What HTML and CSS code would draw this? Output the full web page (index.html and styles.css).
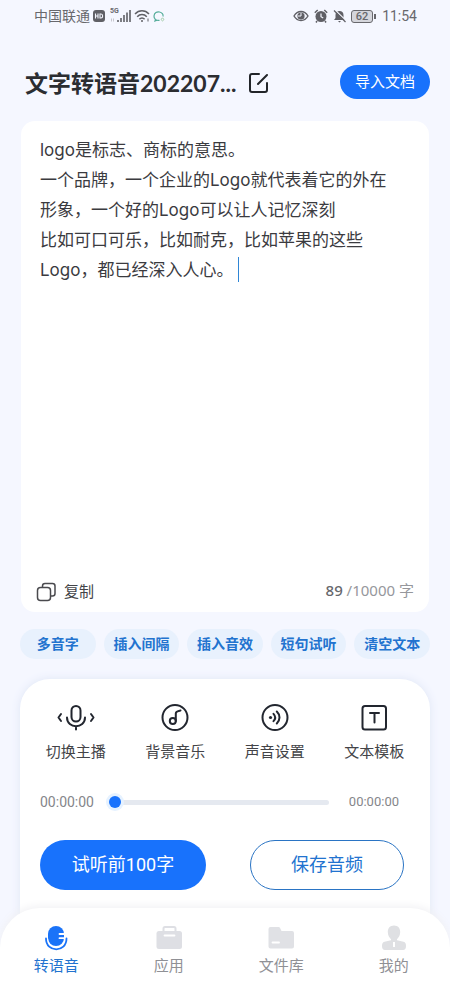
FILE: index.html
```html
<!DOCTYPE html>
<html lang="zh-CN">
<head>
<meta charset="utf-8">
<meta name="viewport" content="width=device-width, initial-scale=1">
<title>文字转语音</title>
<link rel="stylesheet" href="styles.css">
</head>
<body>
<div class="app">
  <div class="status">
    <div class="status-group">
      <span>中国联通</span>
      <svg width="12" height="12" viewBox="0 0 12 12"><rect width="12" height="12" rx="3" fill="#606066"/><path d="M2.5 3.5v5M5 3.5v5M2.5 6H5M7 4v4h1c2.200 0 2.200-4 0-4z" fill="none" stroke="#f5f7ff" stroke-width="1.100"/></svg>
      <span class="signal"><span class="signal-label">5G</span><svg width="21" height="14" viewBox="0 0 21 14"><path d="M8 11v2M11 9v4M14 6v7M17 3.500v9.500M20 1v12" stroke="#606066" stroke-width="1.600" fill="none"/><path d="M1 11h4" stroke="#c8c8cf" stroke-width="3" stroke-dasharray="1 1"/></svg></span>
      <svg width="16" height="14" viewBox="0 0 16 14" fill="none" stroke="#606066" stroke-width="1.500"><path d="M1 5c4-4.300 10-4.300 14 0M3.200 7.700c2.700-3 6.900-3 9.600 0M5.400 10.200c1.500-1.700 3.700-1.700 5.200 0"/><circle cx="8" cy="12" r="1" fill="#606066" stroke="none"/><path d="M14 9.500v3" stroke-width="1"/></svg>
      <svg width="12" height="13" viewBox="0 0 12 13" fill="none" stroke-width="1.200"><path d="M6.500 10.300C3 11 .8 8.500 1 6 1.300 2.800 4 1.500 6.500 2 9 2.500 10.500 4.500 10 6.500" stroke="#55ad9b"/><path d="M2.500 9.500L2 11l2-.8" stroke="#55ad9b"/><path d="M8 9.500l1.500-1.700L11 9.500l-1.500 1.400z" stroke="#a0cba6" stroke-width="1"/></svg>
    </div>
    <div class="status-group">
      <svg width="16" height="12" viewBox="0 0 16 12"><path d="M1 6c3.500-6 10.500-6 14 0-3.500 6-10.500 6-14 0z" fill="none" stroke="#606066" stroke-width="1.400"/><circle cx="8" cy="6" r="3.600" fill="#606066"/><path d="M8 3v3H5" fill="none" stroke="#f5f7ff"/></svg>
      <svg class="status-alarm" width="14" height="14" viewBox="0 0 14 14"><circle cx="7" cy="7.500" r="5.500" fill="#606066"/><path d="M.8 3.700L3.700 1M13.200 3.700L10.300 1M3 12l-1 1.500M11 12l1 1.500" stroke="#606066" stroke-width="1.500"/><path d="M7 4.500v3.200l2.200 1.300" fill="none" stroke="#f5f7ff" stroke-width="1.200"/></svg>
      <svg width="13" height="14" viewBox="0 0 13 14"><path d="M1 11l1.500-2V6C2.500 3.500 4.200 2 6.500 2s4 1.500 4 4v3l1.500 2zM5 12h3l-1.500 1.500z" fill="#606066"/><path d="M1.500 .5l12 11.500" stroke="#f5f7ff" stroke-width="1.200"/><path d="M1 1.500l11.500 11.500" stroke="#606066" stroke-width="1.200"/></svg>
      <span class="battery">62</span>
      <span class="clock">11:54</span>
    </div>
  </div>

  <header class="header">
    <h1 class="title">文字转语音202207...</h1>
    <button class="icon-button" type="button" aria-label="重命名">
      <svg width="22" height="22" viewBox="0 0 22 22" fill="none" stroke="#222529" stroke-width="2" stroke-linecap="round" stroke-linejoin="round"><path d="M11 2H4a2 2 0 0 0-2 2v14a2 2 0 0 0 2 2h13a2 2 0 0 0 2-2v-7M10 12L19 3"/></svg>
    </button>
    <button class="import" type="button">导入文档</button>
  </header>

  <main class="main">
    <section class="editor">
      <textarea class="editor-text" aria-label="文本内容" spellcheck="false">logo是标志、商标的意思。
一个品牌，一个企业的Logo就代表着它的外在形象，一个好的Logo可以让人记忆深刻
比如可口可乐，比如耐克，比如苹果的这些Logo，都已经深入人心。</textarea>
      <span class="caret"></span>
      <div class="editor-footer">
        <button class="copy" type="button">
          <svg width="20" height="20" viewBox="0 0 20 20" fill="none" stroke="#4a4a4e" stroke-width="1.500"><rect x="1.500" y="5.500" width="13" height="13" rx="3"/><path d="M6.500 5.500V4a2.500 2.500 0 0 1 2.500-2.500h7.500A2.500 2.500 0 0 1 19 4v7.500a2.500 2.500 0 0 1-2.500 2.500h-2"/></svg>
          复制
        </button>
        <span class="counter"><b class="count">89</b> /10000 字</span>
      </div>
    </section>

    <div class="chips">
      <button class="chip" type="button">多音字</button>
      <button class="chip" type="button">插入间隔</button>
      <button class="chip" type="button">插入音效</button>
      <button class="chip" type="button">短句试听</button>
      <button class="chip" type="button">清空文本</button>
    </div>

    <section class="panel">
      <div class="tools">
        <button class="tool" type="button">
          <svg width="38" height="28" viewBox="0 0 38 28" fill="none" stroke="#22262f" stroke-width="2" stroke-linecap="round" stroke-linejoin="round"><rect x="14.500" y="3" width="9" height="15.500" rx="4.500"/><path d="M10 14.500c0 11.500 18 11.500 18 0M19 23.500v3M4 11L1.500 14.500l2.500 3.500M34 11l2.500 3.500L34 18"/></svg>
          切换主播
        </button>
        <button class="tool" type="button">
          <svg width="28" height="28" viewBox="0 0 28 28" fill="none" stroke="#22262f" stroke-width="2" stroke-linecap="round" stroke-linejoin="round"><circle cx="14" cy="14.500" r="12.500"/><circle cx="11.800" cy="18" r="3"/><path d="M14.800 18v-7.500c0-2 2-2.500 4.700-3"/></svg>
          背景音乐
        </button>
        <button class="tool" type="button">
          <svg width="28" height="28" viewBox="0 0 28 28" fill="none" stroke="#22262f" stroke-width="2" stroke-linecap="round"><circle cx="14" cy="14.500" r="12.500"/><circle cx="9.500" cy="14.500" r="1.600" fill="#22262f" stroke="none"/><path d="M12.500 10.800c2 2.200 2 5.200 0 7.400M15.800 8.500c3.600 3.500 3.600 8.500 0 12"/></svg>
          声音设置
        </button>
        <button class="tool" type="button">
          <svg width="28" height="28" viewBox="0 0 28 28" fill="none" stroke="#22262f" stroke-width="2" stroke-linecap="round"><rect x="2.500" y="3" width="23.500" height="23.500" rx="2.500"/><path d="M10 10h9M14.500 10v9.500"/></svg>
          文本模板
        </button>
      </div>
      <div class="progress">
        <span class="elapsed">00:00:00</span>
        <input class="seek" type="range" min="0" max="100" value="0" aria-label="播放进度">
        <span class="total">00:00:00</span>
      </div>
      <div class="actions">
        <button class="action action-primary" type="button">试听前100字</button>
        <button class="action action-outline" type="button">保存音频</button>
      </div>
    </section>
  </main>

  <nav class="tabs">
    <a class="tab tab-active" href="#voice">
      <svg width="28" height="28" viewBox="0 0 28 28"><rect x="6" y="3" width="16" height="20" rx="8" fill="#1a73f8"/><path d="M17.500 11H23M17.500 15.200H23" stroke="#fff" stroke-width="1.800" stroke-linecap="round"/><path d="M4 15.500c0 14.500 20.500 14.500 20.500 0" fill="none" stroke="#fff" stroke-width="4"/><path d="M4 15.500c0 14.500 20.500 14.500 20.500 0" fill="none" stroke="#1a73f8" stroke-width="1.800" stroke-linecap="round"/></svg>
      转语音
    </a>
    <a class="tab" href="#apps">
      <svg width="28" height="28" viewBox="0 0 28 28"><path d="M8.500 9V5.500A1.500 1.500 0 0 1 10 4h9a1.500 1.500 0 0 1 1.500 1.500V9" fill="none" stroke="#dedfe4" stroke-width="2"/><rect x="1.500" y="8" width="25.500" height="18" rx="2.500" fill="#dedfe4"/><path d="M9.500 12.500h10" stroke="#fff" stroke-width="1.800" stroke-linecap="round"/></svg>
      应用
    </a>
    <a class="tab" href="#files">
      <svg width="28" height="28" viewBox="0 0 28 28"><path d="M3.500 4h8q1.200 0 1.700 1.200L14.500 8H25q2 0 2 2v13.500q0 2-2 2H3.500q-2 0-2-2V6q0-2 2-2z" fill="#e0e1e5"/><path d="M5.500 19.500h6.500" stroke="#fff" stroke-width="1.800" stroke-linecap="round"/></svg>
      文件库
    </a>
    <a class="tab" href="#me">
      <svg width="28" height="28" viewBox="0 0 28 28"><path d="M14 2.500c4 0 6.200 2.800 6.200 6.500 0 3.300-1.500 5.600-3.200 7.200v1l6.500 1.600c2 .6 2.500 2 2.500 4.200 0 2.500-1 4-3 4H5c-2 0-3-1.500-3-4 0-2.200.6-3.600 2.500-4.200l6.500-1.600v-1C9.300 14.600 7.800 12.300 7.800 9c0-3.700 2.200-6.500 6.200-6.500z" fill="#dfe0e3"/><path d="M14 19v5" stroke="#fff" stroke-width="2"/></svg>
      我的
    </a>
  </nav>
</div>
</body>
</html>
```
FILE: styles.css
```css
* {
  box-sizing: border-box;
}

body {
  margin: 0;
  background: #f5f7ff;
  color: #434448;
  font-family: Roboto, "Noto Sans CJK SC", sans-serif;
  font-size: 15px;
  line-height: 20px;
}

button {
  margin: 0;
  padding: 0;
  border: 0;
  background: none;
  color: inherit;
  font: inherit;
  white-space: nowrap;
}

svg {
  flex: none;
}

.app {
  display: flex;
  flex-direction: column;
  min-height: 100vh;
}

/* Status bar */
.status {
  display: flex;
  align-items: center;
  justify-content: space-between;
  height: 32px;
  padding: 0 33px 0 34px;
  color: #68686d;
  font-size: 14px;
}

.status-group {
  display: flex;
  align-items: center;
  gap: 3px;
}

.signal {
  position: relative;
  display: flex;
  margin-left: 2px;
}

.signal-label {
  position: absolute;
  top: -2px;
  left: 0;
  font-size: 7px;
  font-weight: 700;
  line-height: 8px;
}

.status-alarm {
  margin: 0 2px;
}

.battery {
  position: relative;
  width: 22px;
  height: 13px;
  margin: 0 6px 0 2px;
  border: 1px solid #68686d;
  border-radius: 3px;
  background: #d5d6dc;
  font-size: 11px;
  font-weight: 500;
  line-height: 11px;
  text-align: center;
}

.battery::after {
  position: absolute;
  top: 3px;
  right: -4px;
  width: 2px;
  height: 5px;
  background: #68686d;
  content: "";
}

.clock {
  font-size: 14px;
}

/* Header */
.header {
  display: flex;
  align-items: center;
  padding: 33px 20px 22px 25px;
}

.title {
  margin: 0;
  padding-top: 2px;
  overflow: hidden;
  color: #2b2d31;
  font-family: Lato, "Noto Sans CJK SC", sans-serif;
  font-size: 23px;
  font-weight: 700;
  line-height: 32px;
  white-space: nowrap;
}

.icon-button {
  display: flex;
  margin-left: 12px;
  padding-top: 2px;
}

.import {
  width: 90px;
  height: 34px;
  margin-left: auto;
  border-radius: 17px;
  background: #1872fc;
  color: #fff;
}

.main {
  display: flex;
  flex: 1;
  flex-direction: column;
  padding: 0 20px;
}

/* Text editor */
.editor {
  position: relative;
  display: flex;
  flex: 1;
  flex-direction: column;
  margin: 0 1px;
  padding: 14px 15px 8px;
  border-radius: 14px;
  background: #fff;
}

.editor-text {
  flex: 1;
  min-height: 160px;
  margin: 0;
  padding: 0 18px 0 4px;
  overflow: hidden;
  border: 0;
  outline: 0;
  background: none;
  color: #3b3b3f;
  font-family: Inter, "Noto Sans CJK SC", sans-serif;
  font-size: 17px;
  line-height: 30px;
  resize: none;
}

.caret {
  position: absolute;
  top: 136px;
  left: 217px;
  width: 1px;
  height: 25px;
  background: #2f86d6;
}

.editor-footer {
  display: flex;
  align-items: center;
  justify-content: space-between;
  height: 24px;
}

.copy {
  display: flex;
  align-items: center;
  gap: 8px;
}

.counter {
  padding-bottom: 4px;
  color: #96979c;
  font-family: "Noto Sans", "Noto Sans CJK SC", sans-serif;
}

.count {
  color: #66676c;
  font-weight: 500;
}

/* Quick actions */
.chips {
  display: grid;
  grid-template-columns: repeat(5, 1fr);
  gap: 8px;
  margin: 17px 0 20px;
}

.chip {
  height: 30px;
  border-radius: 15px;
  background: #e8f1fd;
  color: #2273cf;
  font-size: 14px;
  font-weight: 700;
}

/* Player panel */
.panel {
  padding: 24px 6px 58px;
  border-radius: 30px 30px 0 0;
  background: #fff;
  box-shadow: 0 0 10px #dfe6f5;
}

.tools {
  display: grid;
  grid-template-columns: repeat(4, 1fr);
}

.tool {
  display: flex;
  flex-direction: column;
  align-items: center;
  gap: 11px;
}

.progress {
  display: flex;
  align-items: center;
  margin: 30px 0 28px;
  padding: 0 25px 0 14px;
  color: #85868a;
}

.elapsed {
  font-size: 14px;
}

.total {
  font-size: 13px;
}

.seek {
  flex: 1;
  min-width: 0;
  height: 20px;
  margin: 0 20px 0 15px;
  appearance: none;
  background: none;
}

.seek::-webkit-slider-runnable-track {
  height: 5px;
  border-radius: 3px;
  background: #e5e9f0;
}

.seek::-webkit-slider-thumb {
  width: 12px;
  height: 12px;
  margin-top: -4px;
  appearance: none;
  border-radius: 50%;
  background: #1872fc;
  box-shadow: 0 0 0 3px #e6f2ff;
}

.actions {
  display: flex;
  justify-content: space-between;
  padding: 0 20px 0 14px;
}

.action {
  height: 50px;
  border-radius: 25px;
  font-size: 18px;
}

.action-primary {
  width: 166px;
  background: #1872fc;
  color: #fff;
}

.action-outline {
  width: 154px;
  border: 1px solid #2a74c4;
  color: #2273cf;
}

/* Bottom tabs */
.tabs {
  position: relative;
  display: grid;
  grid-template-columns: repeat(4, 1fr);
  margin-top: -40px;
  padding: 15px 0 25px;
  border-radius: 40px 40px 0 0;
  background: #fff;
  box-shadow: 0 -2px 8px #f1f1f4;
}

.tab {
  display: flex;
  flex-direction: column;
  align-items: center;
  gap: 5px;
  color: #8f9095;
  text-decoration: none;
}

.tab-active {
  color: #2273cf;
}
```
